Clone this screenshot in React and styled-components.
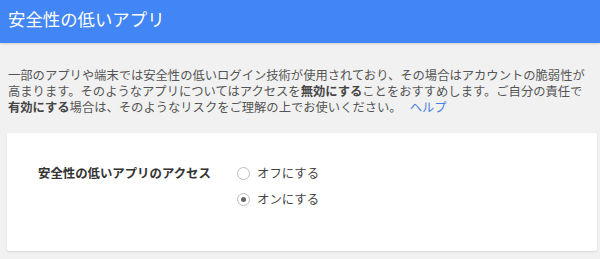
import React from 'react';
import styled, { createGlobalStyle } from 'styled-components';

const Global = createGlobalStyle`
  html, body { margin: 0; padding: 0; background: #f1f1f1; }
  body { font-family: "Noto Sans CJK JP", "Liberation Sans", sans-serif; }
`;

const Page = styled.div`
  width: 600px; height: 259px; overflow: hidden;
  background: #f1f1f1;
`;

const Header = styled.header`
  height: 43px; background: #4285f4;
  display: flex; align-items: center;
  padding: 0 8px; box-sizing: border-box;
  box-shadow: 0 1px 2px rgba(0,0,0,0.15);
`;

const Title = styled.h1`
  margin: 0; padding: 0 0 6px;
  font-size: 17.4px; font-weight: normal;
  color: #fff;
`;

const Intro = styled.p`
  margin: 0; padding: 24px 8px 0;
  font-size: 12.3px; line-height: 16px;
  color: #555;
  b { font-weight: bold; color: #444; }
`;

const Help = styled.a`
  color: #4b7fe0; text-decoration: none; margin-left: 8px;
`;

const Card = styled.section`
  margin: 18px 3px 0 7px;
  height: 118px; box-sizing: border-box;
  background: #fff; border-radius: 2px;
  box-shadow: 0 1px 2px rgba(0,0,0,0.12);
  display: flex; align-items: flex-start;
  padding: 31px 0 0 31px;
`;

const Label = styled.div`
  width: 199px; font-size: 12.4px; font-weight: bold; color: #333;
  line-height: 18px;
`;

const Options = styled.div`
  display: flex; flex-direction: column; gap: 8px;
`;

const Option = styled.label`
  display: flex; align-items: center; gap: 7px;
  font-size: 12.4px; color: #444; line-height: 18px;
`;

const Dot = styled.span`
  width: 11px; height: 11px; border-radius: 50%;
  border: 1px solid #bdbdbd; background: #fff;
  display: flex; align-items: center; justify-content: center;
  &::after {
    content: ''; width: 5px; height: 5px; border-radius: 50%;
    background: ${({ $on }) => $on ? '#666' : 'transparent'};
  }
`;

const choices = [
  { label: 'オフにする', on: false },
  { label: 'オンにする', on: true },
];

export default function App() {
  return (
    <Page>
      <Global />
      <Header><Title>安全性の低いアプリ</Title></Header>
      <Intro>
        一部のアプリや端末では安全性の低いログイン技術が使用されており、その場合はアカウントの脆弱性が高まります。そのようなアプリについてはアクセスを<b>無効にする</b>ことをおすすめします。ご自分の責任で<b>有効にする</b>場合は、そのようなリスクをご理解の上でお使いください。
        <Help href="#">ヘルプ</Help>
      </Intro>
      <Card>
        <Label>安全性の低いアプリのアクセス</Label>
        <Options>
          {choices.map(c => (
            <Option key={c.label}><Dot $on={c.on} />{c.label}</Option>
          ))}
        </Options>
      </Card>
    </Page>
  );
}
